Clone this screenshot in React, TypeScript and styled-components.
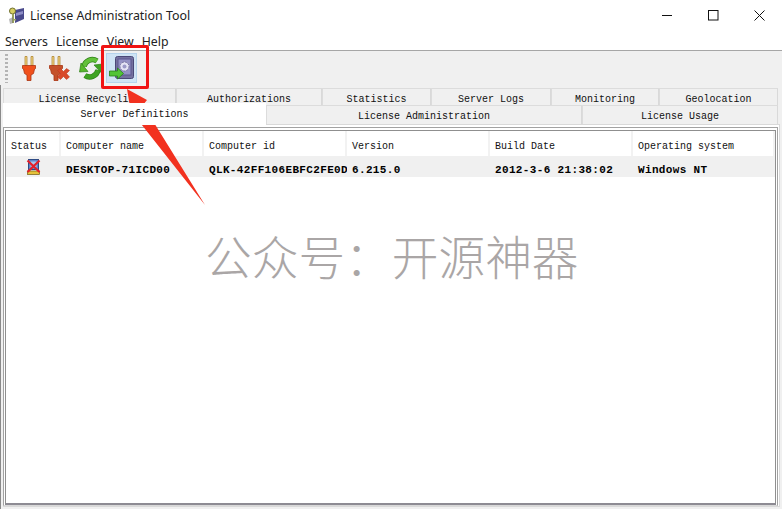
import * as React from 'react';
import styled, { createGlobalStyle } from 'styled-components';

const GlobalStyle = createGlobalStyle`
  html, body {
    margin: 0;
    padding: 0;
    background: #fff;
  }
`;

const Window = styled.div`
  position: relative;
  width: 782px;
  height: 509px;
  overflow: hidden;
  background: #fff;
  font-family: 'Liberation Mono', monospace;
  color: #111;
`;

const TitleBar = styled.div`
  display: flex;
  align-items: center;
  height: 31px;
  padding-left: 8px;
`;

const AppName = styled.div`
  margin-left: 5px;
  flex: 1;
  font: 12.4px 'Noto Sans', sans-serif;
  color: #222;
`;

const WinControl = styled.div`
  width: 46px;
  height: 31px;
  display: flex;
  align-items: center;
  justify-content: center;
`;

const MenuBar = styled.div`
  display: flex;
  height: 19px;
  align-items: center;
  padding: 1px 0 0 5px;
  box-sizing: border-box;
  gap: 8px;
  font: 12.3px 'Noto Sans', sans-serif;
  color: #222;
`;

const Toolbar = styled.div`
  display: flex;
  align-items: center;
  height: 35px;
  box-sizing: border-box;
  border-top: 1px solid #a6a6a6;
  background: #f0f0f0;
  padding-left: 5px;
`;

const Grip = styled.div`
  width: 3px;
  height: 29px;
  margin-right: 5px;
  background-image: linear-gradient(#b4b4b4 2px, transparent 2px);
  background-size: 3px 4px;
`;

const ToolButton = styled.div<{ $active?: boolean }>`
  width: 31px;
  height: 30px;
  display: flex;
  align-items: center;
  justify-content: center;
  box-sizing: border-box;
  background: ${p => (p.$active ? '#cfe4f5' : 'transparent')};
  border: 1px solid ${p => (p.$active ? '#b5d3ec' : 'transparent')};
`;

const TabArea = styled.div`
  display: flex;
  flex-direction: column;
  height: 424px;
  box-sizing: border-box;
  padding: 3px 2px 2px 2px;
  border-left: 1px solid #8a8a8a;
  background: #f0f0f0;
`;

const TabRow = styled.div`
  display: flex;
  height: 17px;
  font-size: 10px;
  line-height: 11px;
`;

const LowerRow = styled(TabRow)`
  height: 19px;
`;

const Tab = styled.div<{ $width: number }>`
  width: ${p => p.$width}px;
  box-sizing: border-box;
  text-align: center;
  padding-top: 5px;
  border-top: 1px solid #dcdcdc;
  border-right: 1px solid #d9d9d9;
  border-left: 1px solid #dcdcdc;
  background: #f0f0f0;
`;

const ActiveTab = styled(Tab)`
  position: relative;
  z-index: 1;
  height: 22px;
  margin-top: -2px;
  background: #fff;
  border-color: #fff;
`;

const Panel = styled.div`
  flex: 1;
  display: flex;
  background: #fff;
  border: 1px solid #d9d9d9;
  border-left: 0;
  padding: 2px 1px 0 0;
`;

const TableBox = styled.div`
  flex: 1;
  display: flex;
  border: 1px solid #a2a2a2;
  border-bottom-color: #d8d8d8;
  padding: 2px 1px 0;
`;

const TableInner = styled.div`
  flex: 1;
  border: 1px solid #8f8f8f;
  border-bottom: 2px solid #8d8b93;
`;

const Row = styled.div`
  display: flex;
`;

const HeadCell = styled.div<{ $width: number }>`
  width: ${p => p.$width}px;
  height: 25px;
  box-sizing: border-box;
  padding: 5px 0 0 5px;
  display: flex;
  align-items: center;
  font-size: 10px;
  border-right: 2px solid #f2f2f2;
  white-space: nowrap;
`;

const DataRow = styled(Row)`
  background: #f0f0f0;
  height: 21px;
`;

const DataCell = styled.div<{ $width: number }>`
  width: ${p => p.$width}px;
  box-sizing: border-box;
  padding: 6px 0 0 5px;
  display: flex;
  align-items: center;
  overflow: hidden;
  white-space: nowrap;
  font-size: 11px;
  font-weight: bold;
  letter-spacing: 0.35px;
  color: #000;
`;

const StatusCell = styled(DataCell)`
  justify-content: center;
  padding: 1px 0 0;
`;

const Watermark = styled.div`
  position: absolute;
  left: 205px;
  top: 229px;
  font: 300 46.7px/52px 'Noto Sans CJK SC', sans-serif;
  color: #aaa6a6;
  white-space: nowrap;
`;

const Highlight = styled.div`
  position: absolute;
  left: 101px;
  top: 45px;
  width: 48px;
  height: 44px;
  box-sizing: border-box;
  border: 3px solid #f01414;
  border-radius: 2px;
`;

const ArrowLayer = styled.svg`
  position: absolute;
  left: 120px;
  top: 85px;
`;

const AppIcon = () => (
  <svg width="17" height="18" viewBox="0 0 17 18">
    <path d="M7 3l9-2v11l-9 4z" fill="#4a4a8c" />
    <path d="M8 6l7-2v3l-7 2z" fill="#8d8dc6" />
    <circle cx="4.500" cy="4" r="3" fill="#d8cf62" stroke="#6f6f2f" />
    <path d="M4 7h2v9H4zM6 12h2v1.500H6z" fill="#9aa35a" />
    <path d="M1 12l4-2v6l-3 1z" fill="#7b7b7b" opacity=".55" />
  </svg>
);

const Plug = ({ dark }: { dark?: boolean }) => (
  <g>
    <path d="M3 .5h2v9H3zM9 .5h2v9H9z" fill="#f5d98a" stroke="#a67a1e" strokeWidth=".7" />
    <path
      d="M.5 9.500h13v3l-1 .5-1 4.500-2.500 1.500v5.500H5v-5.500L2.500 17.500l-1-4.500-1-.5z"
      fill={dark ? '#c4512a' : '#f0501c'}
      stroke="#a93412"
      strokeWidth=".8"
    />
  </g>
);

const PlugIcon = () => (
  <svg width="14" height="25" viewBox="0 0 14 25">
    <Plug />
  </svg>
);

const PlugOffIcon = () => (
  <svg width="22" height="25" viewBox="0 0 22 25">
    <Plug dark />
    <path
      d="M8.500 14.500l3-2 3 3 3-3 3 2-3 3 3 3.500-3 2.500-3-3-3 3-3-2.500 3-3.500z"
      fill="#d8492a"
      stroke="#b9361a"
      strokeWidth=".5"
    />
  </svg>
);

const RefreshIcon = () => (
  <svg width="24" height="26" viewBox="0 0 24 26">
    <path d="M5 11.500A8.500 8.500 0 0 1 18 6" fill="none" stroke="#2d7f16" strokeWidth="5.500" />
    <path d="M5 11.500A8.500 8.500 0 0 1 18 6" fill="none" stroke="#63c13a" strokeWidth="4" />
    <path d="M15 10l9-1-1.500 9z" fill="#3fa322" stroke="#2d7f16" strokeWidth=".7" />
    <path d="M19 15a8.500 8.500 0 0 1-13 5.500" fill="none" stroke="#2d7f16" strokeWidth="5.500" />
    <path d="M19 15a8.500 8.500 0 0 1-13 5.500" fill="none" stroke="#3fa322" strokeWidth="4" />
    <path d="M9 16.500L.5 17 2 8z" fill="#58b82c" stroke="#2d7f16" strokeWidth=".7" />
  </svg>
);

const VaultIcon = () => (
  <svg width="25" height="24" viewBox="0 0 25 24">
    <rect x="6.500" y=".5" width="18" height="22" rx="2" fill="#74719f" stroke="#4b4878" />
    <rect x="9" y="3" width="13" height="16" fill="#9492c4" stroke="#5a5790" />
    <circle cx="15.500" cy="10.500" r="4.500" fill="#e4e4f4" stroke="#77749f" strokeDasharray="2 1" />
    <circle cx="15.500" cy="10.500" r="2" fill="#9c9ac8" />
    <path d="M.5 15h8v-3l6 5.500-6 5.500v-3h-8z" fill="#52c437" stroke="#26801a" strokeWidth=".8" />
  </svg>
);

const StatusIcon = () => (
  <svg width="17" height="17" viewBox="0 0 17 17">
    <rect x="3.500" y=".5" width="10" height="10" fill="#5f86c9" stroke="#2f4c86" />
    <rect x="5.500" y="2.500" width="6" height="6" fill="#a9c7ee" />
    <rect x="2.500" y="12" width="12" height="3.500" fill="#e5c23a" stroke="#6f5a12" strokeWidth=".7" />
    <path d="M2.500 1.500l12 11.500M14.500 1.500L2.500 13" stroke="#e3202a" strokeWidth="2.200" />
  </svg>
);

const upperTabs: [string, number][] = [
  ['License Recycling', 173],
  ['Authorizations', 146],
  ['Statistics', 109],
  ['Server Logs', 120],
  ['Monitoring', 108],
  ['Geolocation', 119],
];

const lowerTabs: [string, number][] = [
  ['License Administration', 316],
  ['License Usage', 196],
];

const columns: [string, number][] = [
  ['Status', 55],
  ['Computer name', 143],
  ['Computer id', 143],
  ['Version', 143],
  ['Build Date', 143],
  ['Operating system', 142],
];

const App: React.FC = () => (
  <Window>
    <GlobalStyle />
    <TitleBar>
      <AppIcon />
      <AppName>License Administration Tool</AppName>
      <WinControl>
        <svg width="11" height="11" viewBox="0 0 11 11">
          <path d="M0 5.500h10" stroke="#111" />
        </svg>
      </WinControl>
      <WinControl>
        <svg width="11" height="11" viewBox="0 0 11 11">
          <rect x=".5" y=".5" width="9.500" height="9.500" fill="none" stroke="#111" />
        </svg>
      </WinControl>
      <WinControl>
        <svg width="11" height="11" viewBox="0 0 11 11">
          <path d="M.5.500l10 10M10.500.500l-10 10" stroke="#111" />
        </svg>
      </WinControl>
    </TitleBar>
    <MenuBar>
      <span>Servers</span>
      <span>License</span>
      <span>View</span>
      <span>Help</span>
    </MenuBar>
    <Toolbar>
      <Grip />
      <ToolButton>
        <PlugIcon />
      </ToolButton>
      <ToolButton>
        <PlugOffIcon />
      </ToolButton>
      <ToolButton>
        <RefreshIcon />
      </ToolButton>
      <ToolButton $active>
        <VaultIcon />
      </ToolButton>
    </Toolbar>
    <TabArea>
      <TabRow>
        {upperTabs.map(([label, width]) => (
          <Tab key={label} $width={width}>
            {label}
          </Tab>
        ))}
      </TabRow>
      <LowerRow>
        <ActiveTab $width={263}>Server Definitions</ActiveTab>
        {lowerTabs.map(([label, width]) => (
          <Tab key={label} $width={width}>
            {label}
          </Tab>
        ))}
      </LowerRow>
      <Panel>
        <TableBox>
          <TableInner>
            <Row>
              {columns.map(([label, width]) => (
                <HeadCell key={label} $width={width}>
                  {label}
                </HeadCell>
              ))}
            </Row>
            <DataRow>
              <StatusCell $width={55}>
                <StatusIcon />
              </StatusCell>
              <DataCell $width={143}>DESKTOP-71ICD00</DataCell>
              <DataCell $width={143}>QLK-42FF106EBFC2FE0D</DataCell>
              <DataCell $width={143}>6.215.0</DataCell>
              <DataCell $width={143}>2012-3-6 21:38:02</DataCell>
              <DataCell $width={142}>Windows NT</DataCell>
            </DataRow>
          </TableInner>
        </TableBox>
      </Panel>
    </TabArea>
    <Watermark>公众号：开源神器</Watermark>
    <Highlight />
    <ArrowLayer width="100" height="125" viewBox="0 0 100 125">
      <path d="M7 4L27 15 23 20 85 120 18 35 13 39z" fill="#f2311f" />
    </ArrowLayer>
  </Window>
);

export default App;
